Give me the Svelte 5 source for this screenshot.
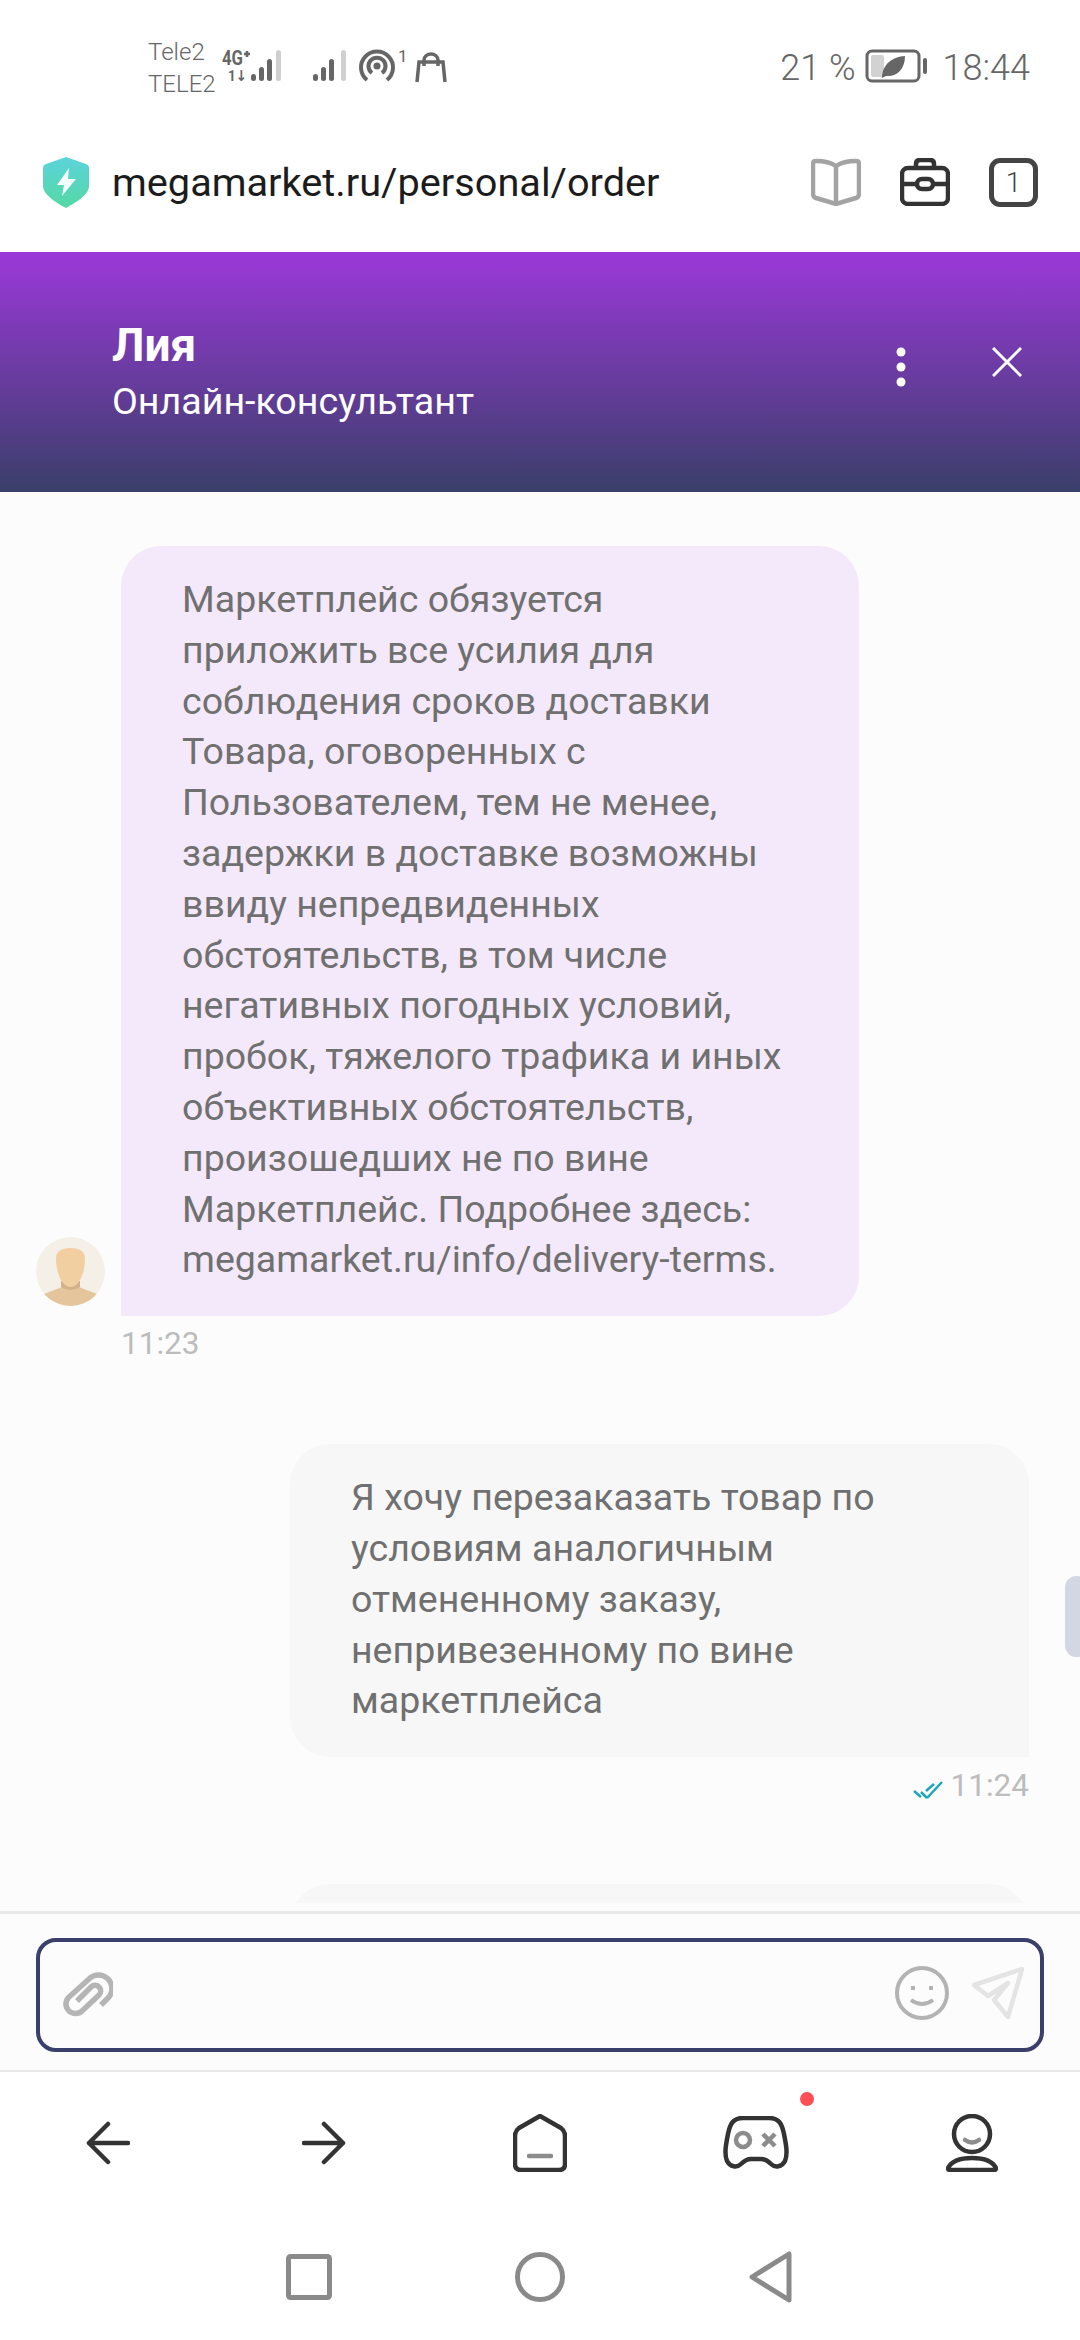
<script lang="ts">
    const botLines = [
        'Маркетплейс обязуется',
        'приложить все усилия для',
        'соблюдения сроков доставки',
        'Товара, оговоренных с',
        'Пользователем, тем не менее,',
        'задержки в доставке возможны',
        'ввиду непредвиденных',
        'обстоятельств, в том числе',
        'негативных погодных условий,',
        'пробок, тяжелого трафика и иных',
        'объективных обстоятельств,',
        'произошедших не по вине',
        'Маркетплейс. Подробнее здесь:',
        'megamarket.ru/info/delivery-terms.'
    ];
    const myLines = [
        'Я хочу перезаказать товар по',
        'условиям аналогичным',
        'отмененному заказу,',
        'непривезенному по вине',
        'маркетплейса'
    ];
</script>

<div class="page">
    <div class="status">
        <div class="carriers">
            <span>Tele2</span>
            <span>TELE2</span>
        </div>
        <svg class="sig" width="60" height="36" viewBox="0 0 60 36">
            <text x="0" y="17" class="net" textLength="21" lengthAdjust="spacingAndGlyphs">4G</text>
            <path d="M22 6 H28 M25 3 V9" stroke="#666" stroke-width="2.500" />
            <text x="6" y="33" class="arrows" textLength="19" lengthAdjust="spacingAndGlyphs">1↓</text>
            <g fill="#666">
                <rect x="29" y="26" width="5" height="7" rx="2.500" />
                <rect x="37" y="19" width="5" height="14" rx="2.500" />
                <rect x="45" y="11" width="5" height="22" rx="2.500" />
            </g>
            <rect x="54" y="2" width="5" height="31" rx="2.500" fill="#d0d0d0" />
        </svg>
        <svg class="sig2" width="36" height="36" viewBox="0 0 36 36">
            <g fill="#666">
                <rect x="1" y="26" width="5" height="7" rx="2.500" />
                <rect x="9" y="19" width="5" height="14" rx="2.500" />
                <rect x="17" y="11" width="5" height="22" rx="2.500" />
            </g>
            <rect x="29" y="2" width="5" height="31" rx="2.500" fill="#d0d0d0" />
        </svg>
        <svg class="hotspot" width="48" height="36" viewBox="0 0 48 36" fill="none" stroke="#666" stroke-width="4">
            <path d="M8 32 A16 16 0 1 1 28 32" />
            <path d="M13 25 A8.500 8.500 0 1 1 23 25" />
            <circle cx="18" cy="18" r="3.500" fill="#666" stroke="none" />
            <text x="39" y="14" class="super">1</text>
        </svg>
        <svg class="bag" width="32" height="32" viewBox="0 0 32 32" fill="none" stroke="#666" stroke-width="3.500">
            <path d="M2 30 L4 10 H28 L30 30" />
            <path d="M9 14 V8 A7 6 0 0 1 23 8 V14" />
        </svg>
        <div class="spacer"></div>
        <span class="pct">21 %</span>
        <svg class="batt" width="63" height="34" viewBox="0 0 63 34">
            <rect x="2" y="2" width="52" height="30" rx="5" fill="none" stroke="#666" stroke-width="3" />
            <rect x="6" y="6" width="13" height="22" rx="2" fill="#d2d2d2" />
            <path d="M17 28 C18 14 28 8 40 7 C40 20 32 28 21 27 L17 29 Z" fill="#666" />
            <rect x="58" y="9" width="4" height="16" rx="2" fill="#666" />
        </svg>
        <span class="clock">18:44</span>
    </div>

    <div class="urlbar">
        <svg width="46" height="52" viewBox="0 0 46 52">
            <defs>
                <linearGradient id="shield" x1="0" y1="0" x2="0" y2="1">
                    <stop offset="0" stop-color="#5cd3dc" />
                    <stop offset="1" stop-color="#54d9a3" />
                </linearGradient>
            </defs>
            <path d="M23 1 L43 8 Q46 9 46 12 V30 C46 39 32 47 23 52 C14 47 0 39 0 30 V12 Q0 9 3 8 Z" fill="url(#shield)" />
            <path d="M26 12 L14 29 H21 L19 40 L33 23 H25 Z" fill="#f3fdfb" />
        </svg>
        <span class="url">megamarket.ru/personal/order</span>
        <div class="spacer"></div>
        <svg width="50" height="48" viewBox="0 0 50 48" fill="none" stroke="#a3a3a3" stroke-width="4.500" stroke-linejoin="round">
            <path d="M25 8 C19 4 11 3 5 3 Q2 3 2 6 V36 Q2 39 5 40 L25 46 L45 40 Q48 39 48 36 V6 Q48 3 45 3 C39 3 31 4 25 8 Z" />
            <path d="M25 8 V46" />
        </svg>
        <svg class="case" width="50" height="48" viewBox="0 0 50 48" fill="none" stroke="#333" stroke-width="4.500">
            <rect x="2" y="10" width="46" height="36" rx="6" />
            <path d="M16 10 V6 Q16 2 20 2 H30 Q34 2 34 6 V10" />
            <path d="M2 26 H17 M33 26 H48" />
            <rect x="17" y="21" width="16" height="10" rx="5" />
        </svg>
        <div class="tabs">1</div>
    </div>

    <header class="head">
        <div class="who">
            <div class="name">Лия</div>
            <div class="role">Онлайн-консультант</div>
        </div>
        <svg class="more" width="10" height="40" viewBox="0 0 10 40" fill="#fff">
            <circle cx="5" cy="5" r="4.500" />
            <circle cx="5" cy="20" r="4.500" />
            <circle cx="5" cy="35" r="4.500" />
        </svg>
        <svg class="close" width="30" height="30" viewBox="0 0 30 30" stroke="#fff" stroke-width="3">
            <path d="M1 1 L29 29 M29 1 L1 29" />
        </svg>
    </header>

    <main class="chat">
        <div class="bot-row">
            <svg class="avatar" width="69" height="69" viewBox="0 0 69 69">
                <defs>
                    <clipPath id="ava"><circle cx="34.500" cy="34.500" r="34.500" /></clipPath>
                </defs>
                <g clip-path="url(#ava)">
                    <rect width="69" height="69" fill="#f5f0e7" />
                    <path d="M8 57 L26 50 H43 L61 57 V69 H8 Z" fill="#e4c59c" />
                    <path d="M25 44 H44 V50 Q34.500 56 25 50 Z" fill="#d3b28a" />
                    <path d="M20 22 C20 15 24 11 34.500 11 C45 11 49 15 49 22 C49 34 44 50 34.500 50 C25 50 20 34 20 22 Z" fill="#f1cfa0" />
                </g>
            </svg>
            <div class="bubble bot">
                {#each botLines as line}
                    <div>{line}</div>
                {/each}
            </div>
        </div>
        <div class="time bot-time">11:23</div>

        <div class="bubble me">
            {#each myLines as line}
                <div>{line}</div>
            {/each}
        </div>
        <div class="time me-time">
            <svg width="30" height="18" viewBox="0 0 30 18" fill="none" stroke="#1fa5b8" stroke-width="2.500">
                <path d="M1 10 L8 16 M14 17 L29 1 M14 17 L8 11 M13 10 L21 3" />
            </svg>
            <span>11:24</span>
        </div>

        <div class="bubble me third"></div>
        <div class="thumb"></div>
    </main>

    <div class="composer">
        <div class="field">
            <svg width="50" height="46" viewBox="0 0 50 46" fill="none" stroke="#b5b5b5" stroke-width="5.500">
                <path d="M38 33 L45 26 A13 13 0 0 0 26 7 L6 25 A9.500 9.500 0 0 0 19 39 L36 23 A5.500 5.500 0 0 0 28 15 L14 29" />
            </svg>
            <div class="spacer"></div>
            <svg class="smile" width="54" height="54" viewBox="0 0 54 54" fill="none" stroke="#b3b3b3" stroke-width="4">
                <circle cx="27" cy="27" r="25" />
                <rect x="16" y="20" width="4" height="4" fill="#b3b3b3" stroke="none" />
                <rect x="34" y="20" width="4" height="4" fill="#b3b3b3" stroke="none" />
                <path d="M16 34 Q27 42 38 34" />
            </svg>
            <svg class="send" width="52" height="52" viewBox="0 0 52 52" fill="none" stroke="#e4e4e4" stroke-width="4.500" stroke-linejoin="round">
                <path d="M50 2 L2 18 L16 29 L36 16 L22 33 L36 50 Z" />
            </svg>
        </div>
    </div>

    <nav class="nav">
        <div class="cell">
            <svg width="44" height="44" viewBox="0 0 44 44" fill="none" stroke="#333" stroke-width="4.500" stroke-linecap="round" stroke-linejoin="round">
                <path d="M22 3 L3 22 L22 41 M3 22 H42" />
            </svg>
        </div>
        <div class="cell">
            <svg width="44" height="44" viewBox="0 0 44 44" fill="none" stroke="#333" stroke-width="4.500" stroke-linecap="round" stroke-linejoin="round">
                <path d="M22 3 L41 22 L22 41 M41 22 H2" />
            </svg>
        </div>
        <div class="cell">
            <svg width="54" height="58" viewBox="0 0 54 58" fill="none" stroke="#333" stroke-width="4.500" stroke-linejoin="round">
                <path d="M27 2 L48 14 Q52 17 52 22 V50 Q52 56 46 56 H8 Q2 56 2 50 V22 Q2 17 6 14 Z" />
                <path d="M16 42 H38" stroke="#8c8c8c" stroke-linecap="round" />
            </svg>
        </div>
        <div class="cell">
            <svg width="66" height="54" viewBox="0 0 66 54" fill="none" stroke="#333" stroke-width="4.500">
                <path d="M20 2 H46 C56 2 59 8 61 18 C63 28 65 38 62 45 C59 51 52 52 48 48 C44 44 42 43 38 43 H28 C24 43 22 44 18 48 C14 52 7 51 4 45 C1 38 3 28 5 18 C7 8 10 2 20 2 Z" />
                <circle cx="20" cy="24" r="7" stroke="#8c8c8c" />
                <path d="M40 18 L52 30 M52 18 L40 30" stroke="#8c8c8c" />
            </svg>
            <span class="dot"></span>
        </div>
        <div class="cell">
            <svg width="52" height="58" viewBox="0 0 52 58" fill="none" stroke="#333" stroke-width="4.500">
                <circle cx="26" cy="20" r="18" />
                <path d="M19 26 Q26 31 33 26" stroke="#8c8c8c" stroke-linecap="round" />
                <path d="M2 54 C6 46 16 44 26 44 C36 44 46 46 50 54 Q50 56 48 56 H4 Q2 56 2 54 Z" />
            </svg>
        </div>
    </nav>

    <div class="sysnav">
        <svg width="46" height="46" viewBox="0 0 46 46" fill="none" stroke="#8a8a8a" stroke-width="5">
            <rect x="2.500" y="2.500" width="41" height="41" rx="2" />
        </svg>
        <svg width="50" height="50" viewBox="0 0 50 50" fill="none" stroke="#8a8a8a" stroke-width="5">
            <circle cx="25" cy="25" r="22.500" />
        </svg>
        <svg width="44" height="52" viewBox="0 0 44 52" fill="none" stroke="#8a8a8a" stroke-width="5" stroke-linejoin="round">
            <path d="M40 3 V49 L3 26 Z" />
        </svg>
    </div>
</div>

<style>
    :global(body) {
        background: #fff;
    }

    .page {
        width: 1080px;
        height: 2340px;
        display: flex;
        flex-direction: column;
        overflow: hidden;
        font-family: Roboto, "Liberation Sans", sans-serif;
        background: #fff;
    }

    .spacer {
        flex: 1;
    }

    /* status bar */
    .status {
        height: 126px;
        box-sizing: border-box;
        padding: 36px 50px 0 148px;
        display: flex;
        align-items: flex-start;
        color: #666;
    }

    .status svg {
        overflow: visible;
    }

    .carriers {
        display: flex;
        flex-direction: column;
        font-size: 24px;
        line-height: 32px;
        font-weight: 300;
        width: 74px;
    }

    .sig {
        margin-top: 12px;
    }

    .sig2 {
        margin: 12px 0 0 30px;
    }

    .hotspot {
        margin: 12px 0 0 11px;
    }

    .bag {
        margin: 16px 0 0 8px;
    }

    .net {
        font: 700 21px Roboto, sans-serif;
        fill: #666;
    }

    .arrows {
        font: 700 15px Roboto, "DejaVu Sans", sans-serif;
        fill: #666;
    }

    .super {
        font: 400 17px Roboto, sans-serif;
        fill: #666;
        stroke: none;
    }

    .pct,
    .clock {
        font-size: 36px;
        line-height: 42px;
        font-weight: 300;
        margin-top: 11px;
    }

    .batt {
        margin: 13px 0 0 9px;
    }

    .clock {
        margin-left: 15px;
    }

    /* url bar */
    .urlbar {
        height: 126px;
        box-sizing: border-box;
        padding: 29px 42px 43px 43px;
        display: flex;
        align-items: center;
    }

    .url {
        margin-left: 23px;
        padding-top: 1px;
        font-size: 39.700px;
        color: #1c1c1c;
    }

    .case {
        margin-left: 39px;
    }

    .tabs {
        margin-left: 39px;
        width: 49px;
        height: 49px;
        box-sizing: border-box;
        border: 5px solid #444;
        border-radius: 11px;
        display: flex;
        align-items: center;
        justify-content: center;
        font-size: 28px;
        font-weight: 300;
        color: #444;
    }

    /* chat header */
    .head {
        height: 240px;
        box-sizing: border-box;
        padding: 0 58px 0 112px;
        display: flex;
        align-items: center;
        background: linear-gradient(180deg, #9b38d9 0%, #3a3f6a 100%);
        color: #fff;
    }

    .who {
        flex: 1;
    }

    .name {
        font-size: 46px;
        line-height: 58px;
        font-weight: 700;
    }

    .role {
        font-size: 37.600px;
        line-height: 54px;
    }

    .more {
        margin: -10px 86px 0 0;
    }

    .close {
        margin-top: -20px;
    }

    /* chat body */
    .chat {
        position: relative;
        flex: 1;
        min-height: 0;
        overflow: hidden;
        padding: 54px 51px 0 36px;
        background: #fcfcfc;
    }

    .bot-row {
        display: flex;
        align-items: flex-end;
        gap: 16px;
    }

    .avatar {
        margin-bottom: 10px;
        flex: none;
    }

    .bubble {
        box-sizing: border-box;
        width: 738px;
        padding: 28px 20px 31px 61px;
        border-radius: 40px;
        font-size: 37.500px;
        line-height: 50.800px;
        color: #707070;
        white-space: nowrap;
    }

    .bot {
        background: #f4e9fa;
        border-bottom-left-radius: 0;
    }

    .me {
        margin-left: auto;
        margin-top: 80px;
        width: 739px;
        background: #f7f7f7;
        border-bottom-right-radius: 0;
    }

    .time {
        font-size: 31.500px;
        line-height: 40px;
        color: #bcbcbc;
    }

    .bot-time {
        margin: 8px 0 0 85px;
    }

    .me-time {
        display: flex;
        justify-content: flex-end;
        align-items: center;
        gap: 8px;
        margin-top: 9px;
    }

    .me-time svg {
        margin-top: 8px;
    }

    .third {
        margin-top: 78px;
        height: 120px;
    }

    .thumb {
        position: absolute;
        right: -8px;
        top: 1084px;
        width: 23px;
        height: 81px;
        border-radius: 12px;
        background: #d3d6e3;
    }

    /* composer */
    .composer {
        box-sizing: border-box;
        flex: none;
        height: 161px;
        padding: 24px 36px 18px;
        background: #fcfcfc;
        border-top: 3px solid #e8e8e8;
        border-bottom: 2px solid #e8e8e8;
        box-shadow: 0 -8px 0 #fcfcfc;
        position: relative;
    }

    .field {
        height: 114px;
        box-sizing: border-box;
        border: 4px solid #3a3f6b;
        border-radius: 20px;
        display: flex;
        align-items: center;
        padding: 0 16px 0 23px;
    }

    .smile {
        margin: -4px 23px 0 0;
    }

    .send {
        margin-top: -4px;
    }

    /* bottom nav */
    .nav {
        height: 142px;
        flex: none;
        display: grid;
        grid-template-columns: repeat(5, 1fr);
        align-items: center;
        background: #fff;
    }

    .cell {
        position: relative;
        display: flex;
        justify-content: center;
        align-items: center;
    }

    .dot {
        position: absolute;
        width: 14px;
        height: 14px;
        border-radius: 50%;
        background: #fb4f55;
        top: -24px;
        left: 152px;
    }

    .sysnav {
        height: 126px;
        flex: none;
        display: grid;
        grid-template-columns: 231px 231px 231px;
        justify-content: center;
        justify-items: center;
        align-items: center;
    }
</style>
